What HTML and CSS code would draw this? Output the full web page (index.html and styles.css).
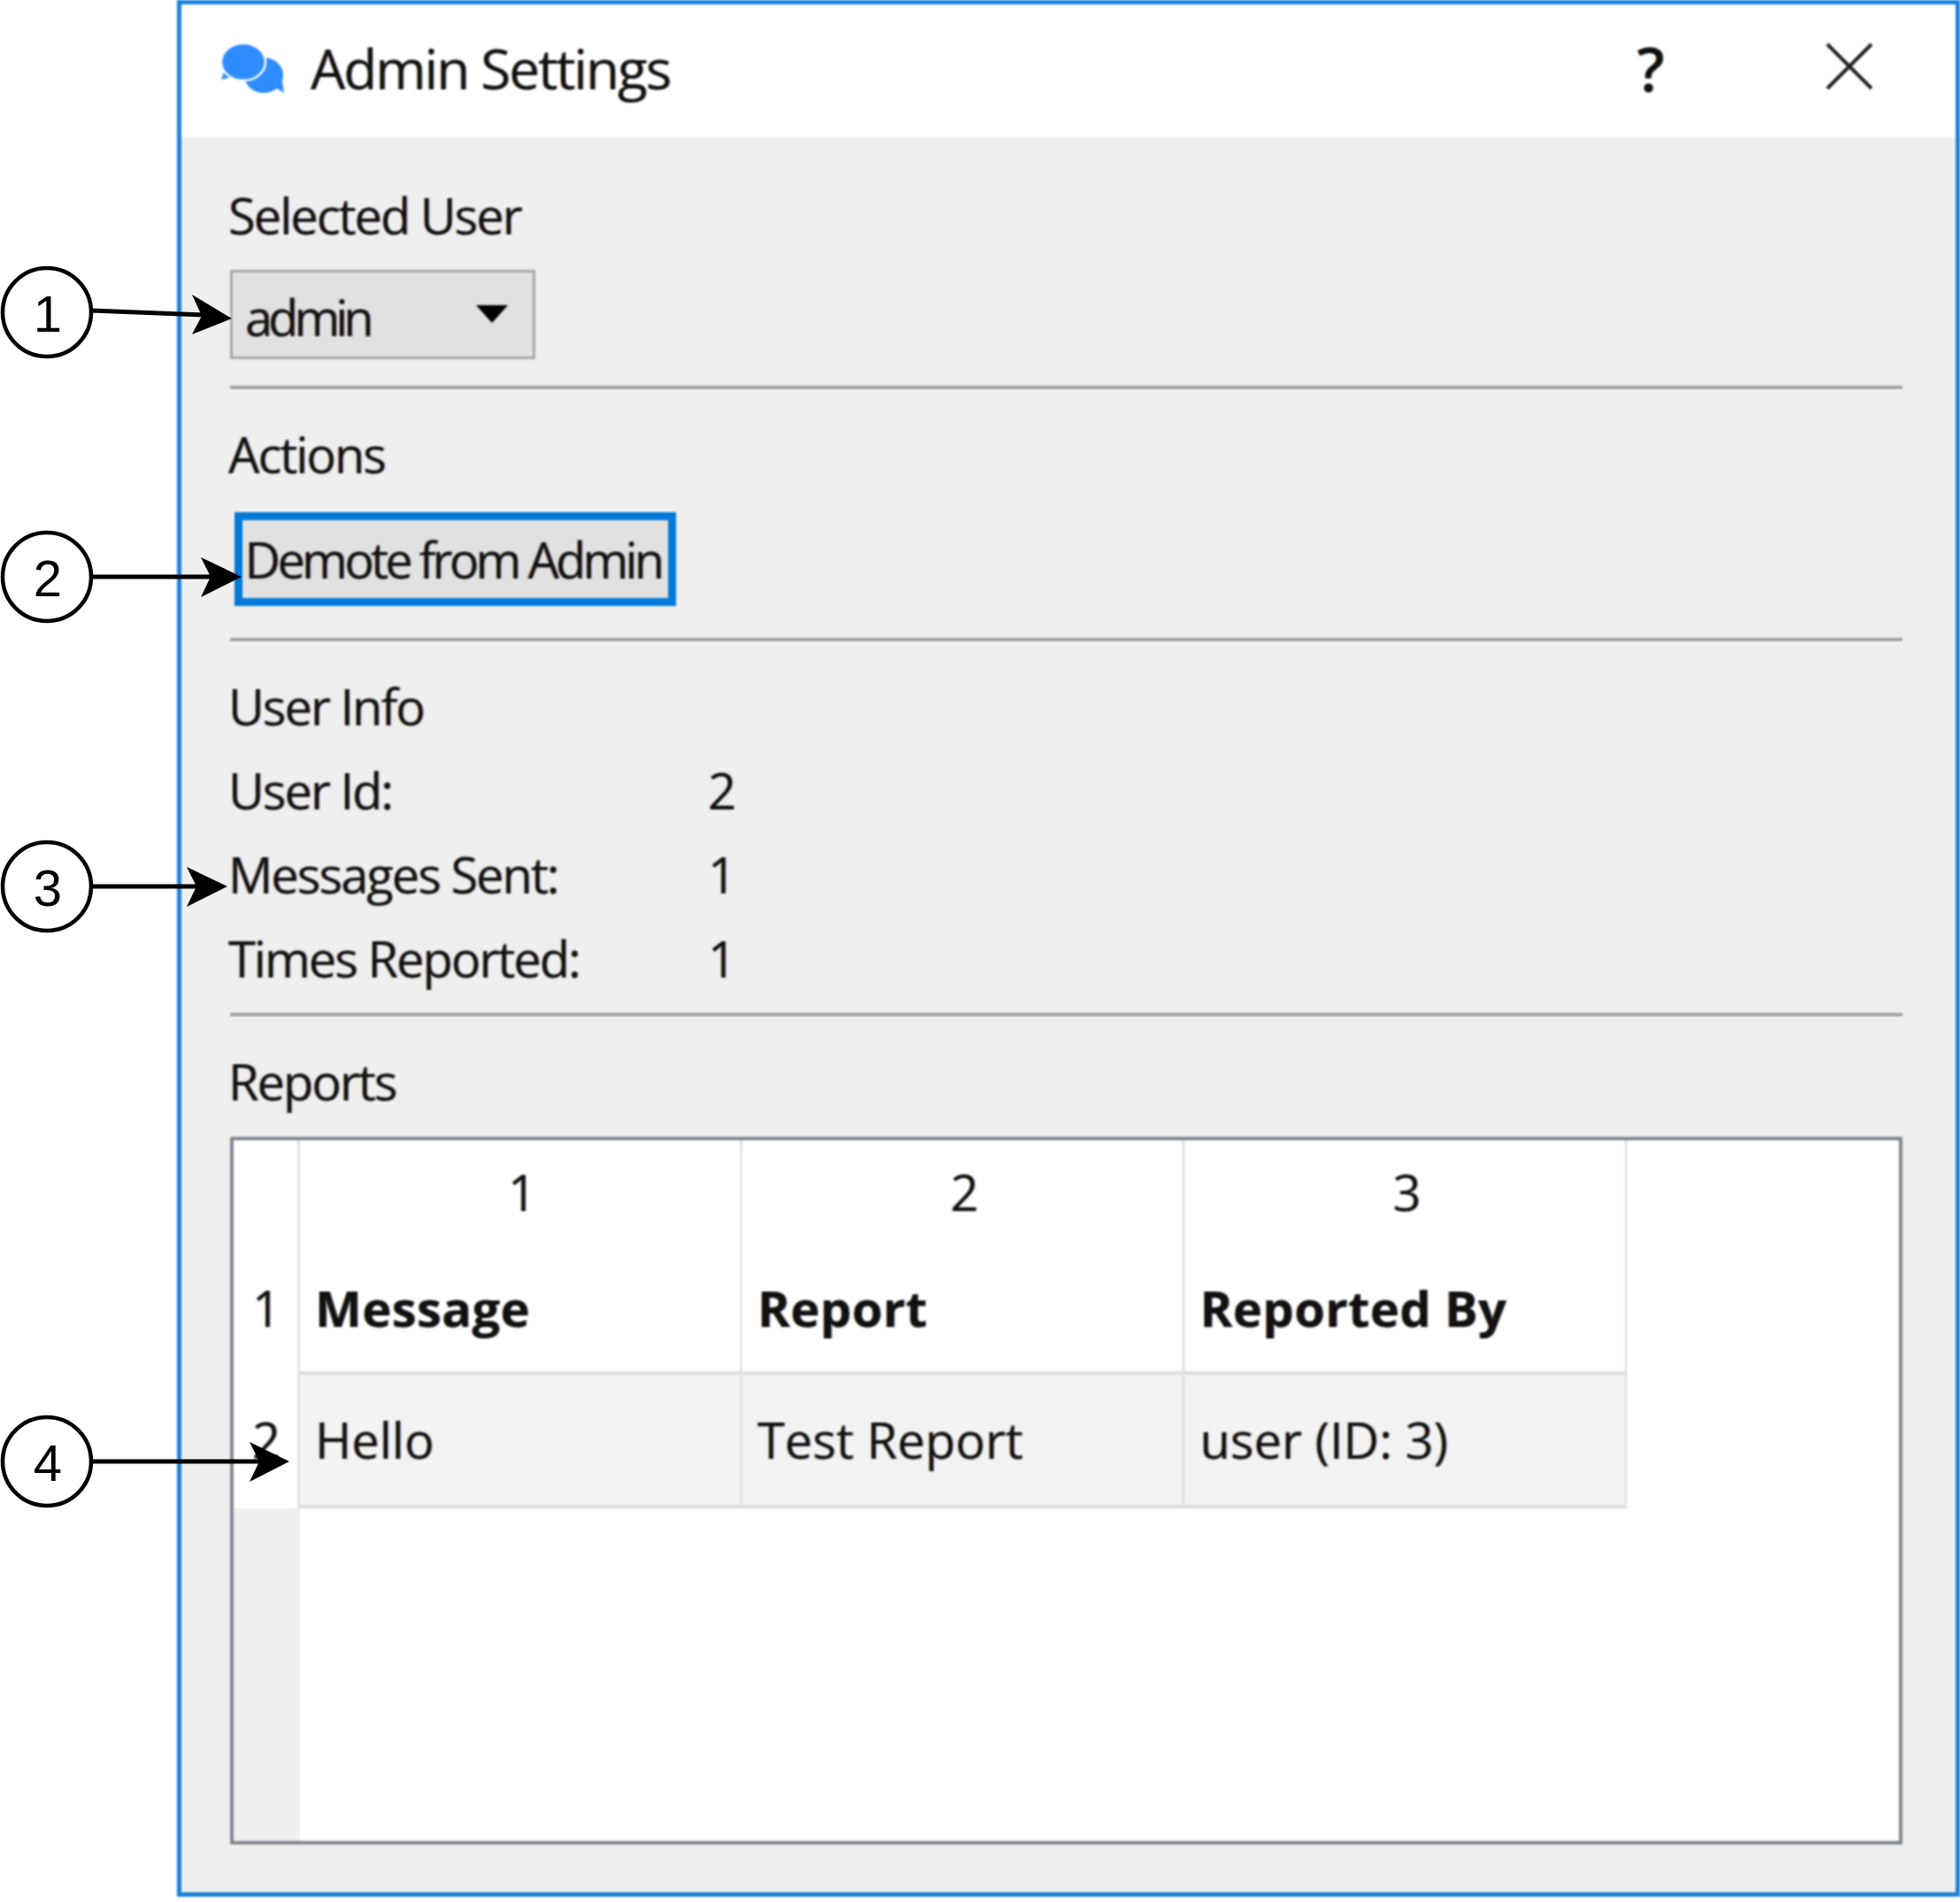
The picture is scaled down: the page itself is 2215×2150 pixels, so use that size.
FILE: index.html
```html
<!DOCTYPE html>
<html lang="en">
<head>
  <meta charset="UTF-8">
  <title>Admin Settings</title>
  <link rel="stylesheet" href="styles.css">
</head>
<body>
  <div class="page">
    <div class="window">
      <div class="titlebar">
        <svg class="app-icon" width="72" height="58" viewBox="0 0 72 58">
          <path fill="#2f8cff" d="M58 48 71 56 68 36z"/>
          <ellipse fill="#2f8cff" cx="48" cy="36" rx="22" ry="20"/>
          <path fill="#2f8cff" d="M5 26 0 41 17 37z"/>
          <ellipse fill="#2f8cff" stroke="#fff" stroke-width="2.5" cx="25" cy="21" rx="25" ry="21"/>
        </svg>
        <span class="title">Admin Settings</span>
        <span class="help">?</span>
        <svg class="close" width="54" height="54" viewBox="0 0 54 54">
          <path d="M2 2 52 52M52 2 2 52" stroke="#222" stroke-width="4" fill="none"/>
        </svg>
      </div>

      <div class="content">
        <div class="label first">Selected User</div>
        <div class="combo">
          <span>admin</span>
          <span class="combo-arrow"></span>
        </div>
        <div class="divider"></div>

        <div class="label">Actions</div>
        <button class="btn">Demote from Admin</button>
        <div class="divider"></div>

        <div class="label">User Info</div>
        <div class="info-row"><span class="info-key">User Id:</span><span>2</span></div>
        <div class="info-row"><span class="info-key">Messages Sent:</span><span>1</span></div>
        <div class="info-row"><span class="info-key">Times Reported:</span><span>1</span></div>
        <div class="divider"></div>

        <div class="label">Reports</div>
        <div class="table">
          <div class="row head-row">
            <div class="row-num"></div>
            <div class="cell col-num">1</div>
            <div class="cell col-num">2</div>
            <div class="cell col-num">3</div>
          </div>
          <div class="row title-row">
            <div class="row-num">1</div>
            <div class="cell"><b>Message</b></div>
            <div class="cell"><b>Report</b></div>
            <div class="cell"><b>Reported By</b></div>
          </div>
          <div class="row data-row">
            <div class="row-num">2</div>
            <div class="cell">Hello</div>
            <div class="cell">Test Report</div>
            <div class="cell">user (ID: 3)</div>
          </div>
          <div class="table-rest">
            <div class="gutter"></div>
          </div>
        </div>
      </div>
    </div>
  </div>

  <!-- numbered callouts drawn over the dialog -->
  <svg class="callouts" width="2215" height="2150" viewBox="0 0 2215 2150">
    <g class="callout">
      <ellipse cx="53" cy="353" rx="50" ry="50"/>
      <text x="54" y="375">1</text>
      <path class="shaft" d="M103 351 230 356"/>
      <path class="head" d="M262 360 217 378 228 357 217 333z"/>
    </g>
    <g class="callout">
      <ellipse cx="53" cy="652" rx="50" ry="50"/>
      <text x="54" y="674">2</text>
      <path class="shaft" d="M103 652H240"/>
      <path class="head" d="M273 652 227 675 238 652 227 630z"/>
    </g>
    <g class="callout">
      <ellipse cx="53" cy="1002" rx="50" ry="50"/>
      <text x="54" y="1024">3</text>
      <path class="shaft" d="M103 1002H225"/>
      <path class="head" d="M257 1002 211 1025 222 1002 211 980z"/>
    </g>
    <g class="callout">
      <ellipse cx="53" cy="1652" rx="50" ry="50"/>
      <text x="54" y="1674">4</text>
      <path class="shaft" d="M103 1652H295"/>
      <path class="head" d="M327 1652 282 1675 293 1652 282 1630z"/>
    </g>
  </svg>
</body>
</html>
```

FILE: styles.css
```css
html, body {
  margin: 0;
  background: #fff;
}

body {
  width: 2215px;
  height: 2150px;
  overflow: hidden;
  position: relative;
  font-family: "Open Sans", "Noto Sans", sans-serif;
  font-size: 56px;
  color: #111;
}

.page {
  padding-left: 200px;
}

.window {
  box-sizing: border-box;
  width: 2015px;
  height: 2144px;
  border: 5px solid #1a82d9;
  background: #efefef;
  filter: blur(1px);
  text-shadow: 1px 0 rgba(0, 40, 160, 0.35), -1px 0 rgba(200, 110, 0, 0.35);
}

.titlebar {
  height: 150px;
  background: #fff;
  display: flex;
  align-items: center;
}

.app-icon {
  margin-left: 45px;
  margin-top: -4px;
}

.title {
  margin-left: 29px;
  margin-top: -6px;
  font-size: 62px;
  letter-spacing: -2px;
  flex: 1;
}

.help {
  font-size: 68px;
  font-weight: 600;
  width: 60px;
  margin-right: 153px;
  margin-top: -6px;
}

.close {
  margin-right: 93px;
  margin-top: -10px;
}

.content {
  padding: 0 60px 0 53px;
  letter-spacing: -2px;
}

.label {
  line-height: 60px;
  margin-top: 41px;
}

.label.first {
  margin-top: 58px;
}

.combo {
  box-sizing: border-box;
  width: 345px;
  height: 101px;
  margin: 32px 0 0 2px;
  padding: 4px 28px 0 14px;
  border: 3px solid #a9a9a9;
  background: #e1e1e1;
  letter-spacing: -5px;
  display: flex;
  align-items: center;
  justify-content: space-between;
}

.combo-arrow {
  width: 0;
  height: 0;
  margin-top: -6px;
  border-left: 18px solid transparent;
  border-right: 18px solid transparent;
  border-top: 20px solid #000;
}

.divider {
  height: 4px;
  margin: 32px 0 0 2px;
  background: #a0a0a0;
  border-bottom: 2px solid #fcfcfc;
}

.combo + .divider {
  margin-top: 30px;
}

.btn {
  display: block;
  box-sizing: border-box;
  width: 499px;
  height: 106px;
  margin: 36px 0 0 7px;
  padding: 0 5px 0 0;
  border: 9px solid #0078d7;
  background: #e1e1e1;
  font: inherit;
  letter-spacing: -3.8px;
  color: inherit;
  text-shadow: inherit;
  text-align: center;
  white-space: nowrap;
}

.btn + .divider {
  margin-top: 36px;
}

.info-row {
  display: flex;
  line-height: 60px;
  margin-top: 35px;
}

.info-key {
  width: 542px;
}

.table {
  box-sizing: border-box;
  height: 800px;
  margin: 33px 0 0 2px;
  border: 4px solid #828790;
  background: #fff;
  letter-spacing: 0;
  display: flex;
  flex-direction: column;
}

.row {
  display: flex;
}

.row-num {
  box-sizing: border-box;
  width: 75px;
  padding-left: 21px;
  flex: none;
  border-right: 3px solid #e3e3e3;
}

.cell {
  box-sizing: border-box;
  width: 500px;
  padding-left: 17px;
  flex: none;
  border-right: 3px solid #e3e3e3;
}

.cell b {
  letter-spacing: 0.4px;
}

.head-row {
  height: 116px;
  line-height: 116px;
}

.col-num {
  text-align: center;
  padding-left: 5px;
}

.title-row {
  height: 149px;
  line-height: 147px;
}

.title-row .cell {
  border-bottom: 4px solid #dedede;
}

.data-row {
  height: 151px;
  line-height: 147px;
}

.data-row .cell {
  background: #f3f3f3;
  border-bottom: 4px solid #dedede;
}

.table-rest {
  flex: 1;
  display: flex;
}

.gutter {
  width: 75px;
  background: #efefef;
}

.callouts {
  position: absolute;
  left: 0;
  top: 0;
}

.callout ellipse {
  fill: #fff;
  stroke: #000;
  stroke-width: 4.5;
}

.callout text {
  font-family: "Liberation Sans", Arial, sans-serif;
  font-size: 58px;
  text-anchor: middle;
  fill: #000;
}

.shaft {
  fill: none;
  stroke: #000;
  stroke-width: 5;
}

.head {
  fill: #000;
}
```
